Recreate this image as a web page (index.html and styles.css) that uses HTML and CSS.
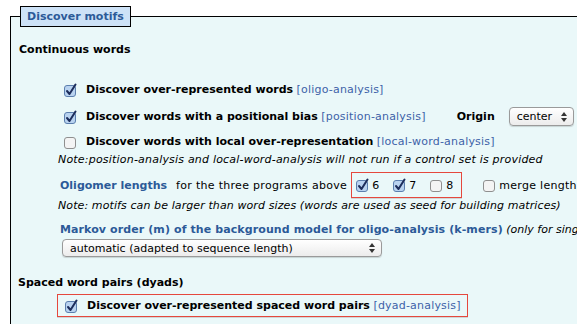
FILE: index.html
```html
<!DOCTYPE html>
<html lang="en">
<head>
    <meta charset="UTF-8">
    <title>Discover motifs</title>
    <link rel="stylesheet" href="styles.css">
</head>
<body>

    <fieldset class="panel">
        <legend>Discover motifs</legend>

        <!-- Continuous words -->
        <div class="section-title first">Continuous words</div>

        <div class="row opt r1">
            <svg class="cb" viewBox="0 0 14 14"><rect x="1.5" y="2.5" width="11" height="11" rx="2.5" class="box on"/><path d="M4 8 L6.5 11 L12.5 1.5" class="tick"/></svg>
            <b>Discover over-represented words</b>&nbsp;<span class="link">[oligo-analysis]</span>
        </div>
        <div class="row opt r2">
            <svg class="cb" viewBox="0 0 14 14"><rect x="1.5" y="2.5" width="11" height="11" rx="2.5" class="box on"/><path d="M4 8 L6.5 11 L12.5 1.5" class="tick"/></svg>
            <b>Discover words with a positional bias</b>&nbsp;<span class="link">[position-analysis]</span>
            <b class="origin">Origin</b>
            <span class="select small">center<svg class="arrows" viewBox="0 0 6 10"><path d="M0 4 L3 0 L6 4 Z M0 6 L3 10 L6 6 Z"/></svg></span>
        </div>
        <div class="row opt r3">
            <svg class="cb" viewBox="0 0 14 14"><rect x="1.5" y="2.5" width="11" height="11" rx="2.5" class="box"/></svg>
            <b>Discover words with local over-representation</b>&nbsp;<span class="link">[local-word-analysis]</span>
        </div>
        <div class="note n1">Note:position-analysis and local-word-analysis will not run if a control set is provided</div>

        <div class="row lengths">
            <span class="label">Oligomer lengths</span>
            <span class="plain">for the three programs above</span>
            <span class="redbox sizes">
                <svg class="cb" viewBox="0 0 14 14"><rect x="1.5" y="2.5" width="11" height="11" rx="2.5" class="box on"/><path d="M4 8 L6.5 11 L12.5 1.5" class="tick"/></svg><span class="num">6</span>
                <svg class="cb" viewBox="0 0 14 14"><rect x="1.5" y="2.5" width="11" height="11" rx="2.5" class="box on"/><path d="M4 8 L6.5 11 L12.5 1.5" class="tick"/></svg><span class="num">7</span>
                <svg class="cb" viewBox="0 0 14 14"><rect x="1.5" y="2.5" width="11" height="11" rx="2.5" class="box"/></svg><span class="num">8</span>
            </span>
            <svg class="cb merge" viewBox="0 0 14 14"><rect x="1.5" y="2.5" width="11" height="11" rx="2.5" class="box"/></svg>
            <span class="plain tight">merge lengths</span>
        </div>
        <div class="note n2">Note: motifs can be larger than word sizes (words are used as seed for building matrices)</div>

        <div class="markov">
            <span class="label wide-label">Markov order (m) of the background model for oligo-analysis (k-mers)</span>
            <i>(only for single strand analysis)</i>
        </div>
        <div class="select wide">automatic (adapted to sequence length)<svg class="arrows" viewBox="0 0 6 10"><path d="M0 4 L3 0 L6 4 Z M0 6 L3 10 L6 6 Z"/></svg></div>

        <!-- Spaced word pairs -->
        <div class="section-title second">Spaced word pairs (dyads)</div>
        <div class="redbox dyad">
            <svg class="cb" viewBox="0 0 14 14"><rect x="1.5" y="2.5" width="11" height="11" rx="2.5" class="box on"/><path d="M4 8 L6.5 11 L12.5 1.5" class="tick"/></svg>
            <b>Discover over-represented spaced word pairs</b>&nbsp;<span class="link">[dyad-analysis]</span>
        </div>
    </fieldset>

</body>
</html>
```

FILE: styles.css
```css
body {
    font-family: "DejaVu Sans", Verdana, sans-serif;
    font-size: 11px;
    color: #000;
    background-color: #fff;
    margin: 0;
    padding: 0;
    overflow: hidden;
}

.panel {
    width: 700px;
    margin: 6px 0 0 10px;
    padding: 0 0 20px 8px;
    border: 1px solid #000;
    background-color: #eaf8f9;
    white-space: nowrap;
}

.panel legend {
    margin-left: 1px;
    padding: 3px 6px 3px 6px;
    border: 1px solid #000;
    background-color: #cde2f7;
    color: #2c5a98;
    font-weight: bold;
    font-size: 11px;
}

.section-title {
    font-weight: bold;
    height: 20px;
    line-height: 20px;
}

.section-title.first {
    margin-top: 13px;
}

.section-title.second {
    margin-top: 16px;
    margin-left: -1px;
}

.row {
    display: flex;
    align-items: center;
}

.opt {
    height: 27px;
    padding-left: 44px;
}

.opt.r1 {
    margin-top: 16px;
}

.opt.r3 {
    height: 23px;
}

.cb {
    width: 14px;
    height: 14px;
    flex: none;
    margin-right: 9px;
}

.cb .box {
    fill: #f4f4f4;
    stroke: #8f8f8f;
    stroke-width: 1;
}

.cb .box.on {
    fill: #b9d3f0;
    stroke: #5c7fae;
}

.cb .tick {
    fill: none;
    stroke: #1d2e5c;
    stroke-width: 2;
    stroke-linecap: round;
    stroke-linejoin: round;
}

.link {
    color: #3d62a8;
    letter-spacing: 0.2px;
}

.origin {
    margin-left: 31px;
}

.select {
    display: inline-flex;
    align-items: center;
    justify-content: space-between;
    border: 1px solid #9a9a9a;
    border-radius: 4px;
    background: linear-gradient(#ffffff, #ececec);
    box-shadow: 0 1px 1px rgba(0, 0, 0, 0.15);
    color: #000;
}

.select .arrows {
    width: 6px;
    height: 10px;
    fill: #333;
}

.select.small {
    width: 50px;
    height: 17px;
    margin-left: 14px;
    padding: 0 6px 0 7px;
}

.select.wide {
    width: 305px;
    height: 16px;
    margin: 2px 0 0 43px;
    padding: 0 6px 0 7px;
}

.note {
    font-style: italic;
    height: 14px;
    line-height: 14px;
    padding-left: 39px;
}

.n1 {
    letter-spacing: 0.2px;
}

.n2 {
    margin-top: 1px;
    letter-spacing: 0.1px;
}

.lengths {
    height: 26px;
    margin-top: 5px;
    padding-left: 41px;
}

.label {
    color: #2c5a98;
    font-weight: bold;
}

.wide-label {
    letter-spacing: 0.1px;
}

.plain {
    margin-left: 9px;
    letter-spacing: 0.3px;
}

.plain.tight {
    margin-left: 0;
}

.redbox {
    border: 1px solid #e5483d;
    box-shadow: 0 1px 0 #d0d6d6;
}

.sizes {
    display: inline-flex;
    align-items: center;
    height: 24px;
    margin-left: 4px;
    padding: 0 8px 0 3px;
}

.sizes .cb {
    margin-right: 3px;
}

.sizes .num {
    margin-right: 13px;
}

.sizes .num:last-child {
    margin-right: 0;
}

.merge {
    margin-left: 20px;
    margin-right: 3px;
}

.markov {
    height: 14px;
    line-height: 14px;
    margin-top: 10px;
    padding-left: 41px;
}

.dyad {
    display: flex;
    align-items: center;
    box-sizing: border-box;
    width: 411px;
    height: 23px;
    margin: 1px 0 0 38px;
    padding-left: 6px;
}
```
